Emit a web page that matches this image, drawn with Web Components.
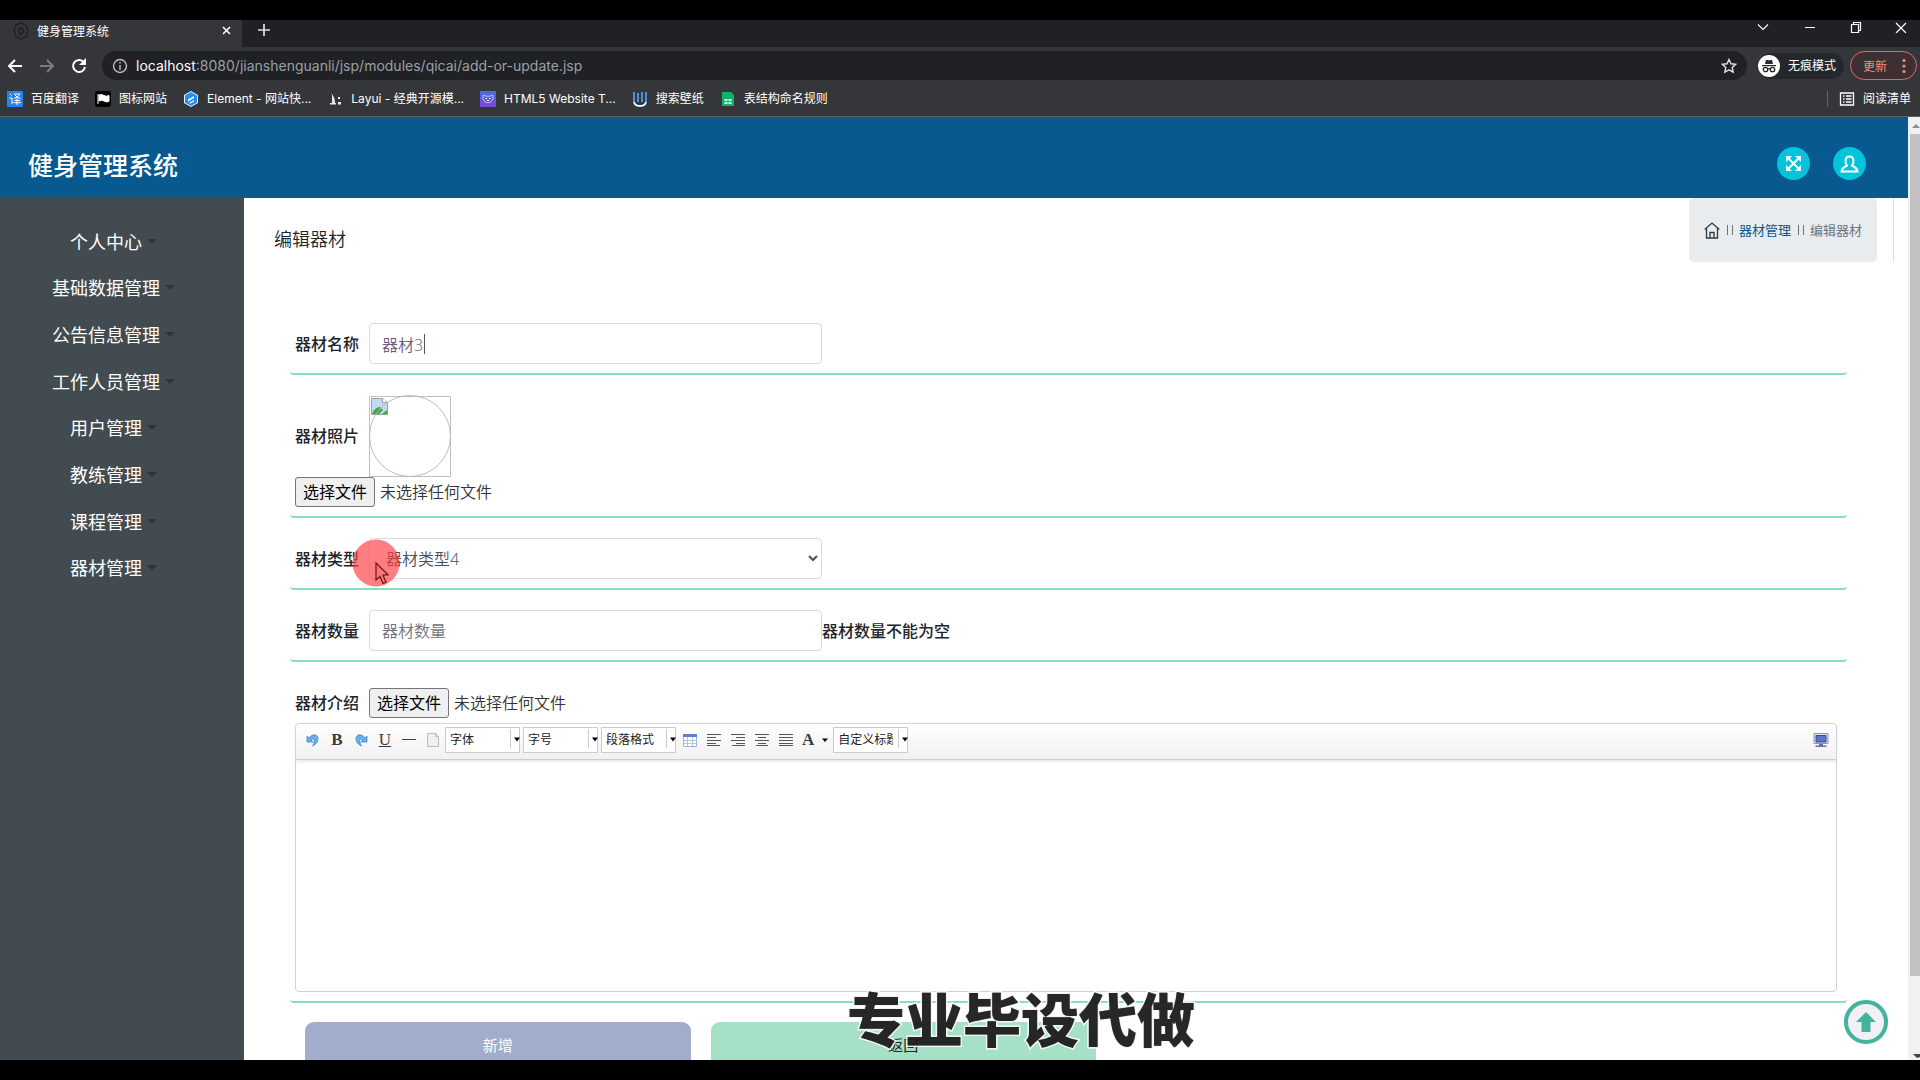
<!DOCTYPE html>
<html lang="zh-CN">
<head>
<meta charset="utf-8">
<title>健身管理系统</title>
<style>
html, body { height: 100%; margin: 0; background: #000; }
body { font-family: "Open Sans", "Noto Sans CJK SC", sans-serif; }
</style>
</head>
<body>
<desktop-screen></desktop-screen>
<script>
function define(name, html) {
  const tpl = document.createElement('template');
  tpl.innerHTML = '<style>:host,*{box-sizing:border-box}button{font:inherit;margin:0;padding:0;border:0;background:none;color:inherit}a{color:inherit;text-decoration:none}svg{display:block;flex:none}</style>' + html;
  customElements.define(name, class extends HTMLElement {
    constructor() {
      super();
      this.attachShadow({ mode: 'open' }).append(tpl.content.cloneNode(true));
    }
  });
}

/* ---------- browser window ---------- */
define('tab-strip', `
<style>
:host{display:flex;height:27px;background:#202124;color:#fff;font-size:12px;align-items:stretch}
.tab{display:flex;align-items:center;width:242px;background:#35363a;padding:0 8px 6px 13px;gap:8px}
.tab span{flex:1}
.tab button,.new{display:grid;place-items:center;width:16px}
.new{margin-left:14px;padding-bottom:7px}
.win{margin-left:auto;display:flex;gap:31px;padding:0 13px 13px 0;align-items:center}
</style>
<div class="tab">
<svg width="16" height="18" viewBox="0 0 16 18" fill="none" stroke="#1c2327" stroke-width="1.5"><path d="M3 3 8 1l5 2 2 6-2 6-5 2-5-2L1 9z"/><path d="M8 4v3m0 4v3"/><circle cx="8" cy="9" r="2.5"/></svg>
<span>健身管理系统</span>
<button aria-label="关闭标签页"><svg width="9" height="9" viewBox="0 0 9 9" stroke="#fff" stroke-width="1.6"><path d="m1 1 7 7m0-7L1 8"/></svg></button>
</div>
<button class="new" aria-label="新标签页"><svg width="12" height="12" viewBox="0 0 12 12" stroke="#dfe1e5" stroke-width="1.7"><path d="M6 0v12M0 6h12"/></svg></button>
<div class="win">
<button aria-label="搜索标签页"><svg width="16" height="12" viewBox="0 0 16 12" fill="none" stroke="#fff" stroke-width="1.1"><path d="m4 3.500 5 5 5-5"/></svg></button>
<button aria-label="最小化"><svg width="16" height="12" viewBox="0 0 16 12" stroke="#fff"><path d="M4 6.500h10"/></svg></button>
<button aria-label="还原"><svg width="16" height="12" viewBox="0 0 16 12" fill="none" stroke="#fff" stroke-width="1.2"><path d="M3.500 3.500h7v8h-7zM5.500 3.500v-2h7v8h-2"/></svg></button>
<button aria-label="关闭"><svg width="12" height="12" viewBox="0 0 12 12" stroke="#fff" stroke-width="1.2"><path d="m1 2 10 10M11 2 1 12"/></svg></button>
</div>`);

define('address-bar', `
<style>
:host{display:flex;align-items:center;height:37px;background:#35363a;padding:0 3px 0 7px;color:#fff;font-size:12px}
.nav{display:flex;gap:16px;margin-right:15px}
.url{flex:1;display:flex;align-items:center;height:29px;border-radius:15px;background:#202124;padding:0 10px;gap:8px;min-width:0}
label{display:flex;flex:1;font-family:"Inter","Noto Sans CJK SC",sans-serif;font-size:14px;line-height:20px;white-space:nowrap;color:#9aa0a6}
b{font-weight:400;color:#fff}
.who{display:flex;align-items:center;gap:8px;height:26px;margin-left:11px;border-radius:13px;background:#26272b;padding-right:8px;line-height:26px}
.up{display:flex;align-items:center;justify-content:space-between;width:67px;height:29px;margin-left:6px;border:1px solid #d96c69;border-radius:15px;background:#3c3033;color:#f28b82;padding:0 10px 0 12px}
</style>
<div class="nav">
<button aria-label="后退"><svg width="16" height="16" viewBox="0 0 16 16" fill="none" stroke="#fff" stroke-width="2"><path d="M15 8H2m6-6L2 8l6 6"/></svg></button>
<button aria-label="前进"><svg width="16" height="16" viewBox="0 0 16 16" fill="none" stroke="#7c7d80" stroke-width="2"><path d="M1 8h13M8 2l6 6-6 6"/></svg></button>
<button aria-label="刷新"><svg width="16" height="16" viewBox="0 0 16 16" fill="none" stroke="#fff" stroke-width="2"><path d="M13 4.500A6 6 0 1 0 14 9"/><path d="M15 0v7H8z" fill="#fff" stroke="none"/></svg></button>
</div>
<div class="url">
<svg width="16" height="16" viewBox="0 0 16 16" fill="none" stroke="#bdc1c6" stroke-width="1.4"><circle cx="8" cy="8" r="6.500"/><path d="M8 7v5M8 4v1.600"/></svg>
<label><b>localhost</b>:8080/jianshenguanli/jsp/modules/qicai/add-or-update.jsp</label>
<svg width="16" height="16" viewBox="0 0 16 16" fill="none" stroke="#dfe1e5" stroke-width="1.400"><path d="m8 1.500 2 4.300 4.600.5-3.400 3.200 1 4.600L8 11.800l-4.200 2.300 1-4.600L1.400 6.300 6 5.800z"/></svg>
</div>
<div class="who">
<svg width="22" height="22" viewBox="0 0 22 22"><circle cx="11" cy="11" r="11" fill="#fff"/><path d="M7 9 8 5h2l1 .6 1-.6h2l1 4zM4 10h14v1.300H4z" fill="#26272b"/><g fill="none" stroke="#26272b" stroke-width="1.300"><circle cx="7.500" cy="14.500" r="2.200"/><circle cx="14.500" cy="14.500" r="2.200"/><path d="M9.700 14q1.300-.8 2.600 0"/></g></svg>
<span>无痕模式</span></div>
<button class="up"><span>更新</span><svg width="4" height="16" viewBox="0 0 4 16" fill="#f28b82"><circle cx="2" cy="2.500" r="1.600"/><circle cx="2" cy="8" r="1.600"/><circle cx="2" cy="13.500" r="1.600"/></svg></button>`);

define('book-mark', `
<style>:host{display:block}a{display:flex;align-items:center;gap:8px;font-family:"Inter","Noto Sans CJK SC",sans-serif;font-size:12px;line-height:20px;color:#fff;white-space:nowrap}</style>
<a href="#"><slot name="icon"></slot><slot></slot></a>`);

define('bookmark-bar', `
<style>
:host{display:flex;align-items:center;height:33px;background:#35363a;border-bottom:1px solid #5a6064;padding:0 9px 3px 7px;gap:16px}
.sep{width:1px;height:16px;background:#5f6368;margin-left:auto;margin-right:-5px}
</style>
<book-mark><svg slot="icon" width="16" height="16" viewBox="0 0 16 16"><rect width="16" height="16" rx="1" fill="#2286f0"/><path d="m3 3 1.500 1.500M2.500 7H5v5.500L6.500 11M7 3h6q-2 3.500-6 4.500M8 4q2 3 5.500 3.500M7.500 9.500h5.500M10 7.500V14M7 11.700h7" stroke="#fff" fill="none"/></svg>百度翻译</book-mark>
<book-mark><svg slot="icon" width="16" height="16" viewBox="0 0 16 16"><rect width="16" height="16" rx="3" fill="#000"/><path d="M3 3v10M4 4q3-1 5 .5t5 0v6q-3 1-5-.5t-5 0z" fill="#fff" stroke="#fff"/></svg>图标网站</book-mark>
<book-mark><svg slot="icon" width="16" height="16" viewBox="0 0 16 16"><path d="m8 0 7 4v8l-7 4-7-4V4z" fill="#e9f5ff"/><path d="m8 1 6 3.500v7L8 15l-6-3.500v-7z" fill="#1f8ff5"/><path d="M5 8.500 11 5v2L5 10.500zM6 12l5-3v1.500l-3.500 2z" fill="#fff"/></svg>Element - 网站快...</book-mark>
<book-mark><svg slot="icon" width="16" height="16" viewBox="0 0 16 16"><path d="M4 2q4 4 4 10H5V4zM3 12h6v1.500H3zM11 6h2v2h-2zM11 11h3v2.500h-3z" fill="#e8eaed"/></svg>Layui - 经典开源模...</book-mark>
<book-mark><svg slot="icon" width="16" height="16" viewBox="0 0 16 16"><defs><linearGradient id="g" x2="0" y2="1"><stop stop-color="#4b6de0"/><stop offset="1" stop-color="#7a45d8"/></linearGradient></defs><rect width="16" height="16" fill="url(#g)"/><path d="m3 4 3 1.200h4L13 4v4q-1 3-5 4-4-1-5-4z" fill="none" stroke="#b9bdf5"/><path d="M5.500 7.500h1.500m2 0h1.500M7 9.500h2" stroke="#fff"/></svg>HTML5 Website T...</book-mark>
<book-mark><svg slot="icon" width="16" height="16" viewBox="0 0 16 16"><path d="M2 1v9q0 5 6 5t6-5V1M6 2v9m4-10v10" fill="none" stroke="#4a90d8" stroke-width="2"/><path d="M2 11q1 4 6 4t6-4" stroke="#fff" fill="none" stroke-width="1.400"/></svg>搜索壁纸</book-mark>
<book-mark><svg slot="icon" width="16" height="16" viewBox="0 0 16 16"><path d="M2 1h9l3 3v11H2z" fill="#0fb269"/><path d="M4.500 8h3v2h-3zM8.500 8h3v2h-3zM4.500 11h3v2h-3zM8.500 11h3v2h-3z" fill="#d9f7e8"/></svg>表结构命名规则</book-mark>
<i class="sep"></i>
<book-mark><svg slot="icon" width="16" height="16" viewBox="0 0 16 16" fill="none" stroke="#fff" stroke-width="1.300"><path d="M1.500 2h13v12h-13zM4 5h1.500M7 5h5.500M4 8h1.500M7 8h5.500M4 11h1.500M7 11h5.500"/></svg>阅读清单</book-mark>`);

/* ---------- application ---------- */
define('app-header', `
<style>
:host{display:flex;align-items:center;justify-content:space-between;height:81px;background:#07598f;padding:12px 42px 0 28px;color:#fff}
h1{margin:0;padding-top:2px;font-size:25px;font-weight:500;line-height:34px}
div{display:flex;gap:23px}
button{width:33px;height:33px;border-radius:50%;background:#02c5dc;display:grid;place-items:center}
</style>
<h1>健身管理系统</h1>
<div>
<button aria-label="全屏"><svg width="17" height="17" viewBox="0 0 17 17"><path d="m3 3 11 11M14 3 3 14" stroke="#fff" stroke-width="2"/><path d="M1 1h6L1 7zM16 1v6l-6-6zM1 16v-6l6 6zM16 16h-6l6-6z" fill="#fff"/></svg></button>
<button aria-label="用户"><svg width="19" height="18" viewBox="0 0 19 18" fill="none" stroke="#fff" stroke-width="2"><path d="M7 10.500C4.500 7 5 1.500 9.500 1.500S14.500 7 12 10.500c1 1 5 1.500 5.500 6h-16c.5-4.500 4.500-5 5.500-6z"/></svg></button>
</div>`);

define('nav-item', `
<style>
:host{display:flex;justify-content:center;align-items:center}
a{position:relative;display:block;color:#fff;font-size:18px;line-height:27px}
a::after{content:"";position:absolute;left:100%;top:10px;margin-left:5px;border:5px solid transparent;border-top-color:#2c3538;border-bottom:0}
</style><a href="#"><slot></slot></a>`);

define('side-nav', `
<style>
:host{display:block;flex:none;width:244px;background:#424c50;padding:21px 32px 0 0}
nav{display:grid;grid-auto-rows:1fr;height:373px}
</style>
<nav><nav-item>个人中心</nav-item><nav-item>基础数据管理</nav-item><nav-item>公告信息管理</nav-item><nav-item>工作人员管理</nav-item><nav-item>用户管理</nav-item><nav-item>教练管理</nav-item><nav-item>课程管理</nav-item><nav-item>器材管理</nav-item></nav>`);

define('page-heading', `
<style>
:host{display:flex;justify-content:space-between;align-items:flex-start;height:64px;padding:0 14px 0 30px}
h2{margin:0;padding-top:28px;font-size:18px;line-height:27px;font-weight:350;color:#212529}
.box{border-right:1px solid #dcdfe6;height:64px;padding:0 16px 0 0}
nav{display:flex;align-items:center;gap:6px;height:64px;padding:0 15px;border-radius:5px;background:#e9ecef;font-size:13px;line-height:20px;color:#6c757d}
nav a{color:#07598f}
i{width:6px;height:10px;margin-left:1px;border:solid #6b7076;border-width:0 1px}
</style>
<h2>编辑器材</h2>
<div class="box"><nav>
<a href="#" aria-label="首页"><svg width="16" height="17" viewBox="0 0 16 17" fill="none" stroke="#2f3b45" stroke-width="1.300"><path d="M.7 7.500 8 1l7.300 6.500M2.500 6.500V16h11V6.500M6 16v-5.500h4V16"/></svg></a>
<i></i><a href="#">器材管理</a><i></i><span>编辑器材</span></nav></div>`);

define('form-row', `
<style>
:host{display:block;border-bottom:2px solid #86dfbf;border-radius:4px;padding:20px 10px 9px 5px}
.line{display:flex;align-items:center;min-height:41px}
.line ::slotted(label:first-child){margin-right:10px}
</style>
<div class="line"><slot></slot></div><slot name="below"></slot>`);

define('file-picker', `
<style>
:host{display:flex;align-items:center;gap:5px;font-size:16px;color:#333;line-height:24px}
input{display:none}
button{height:30px;padding:0 7px;border:1px solid #767676;border-radius:3px;background:#efefef;color:#000}
span{font-weight:350}
</style>
<input type="file" aria-label="选择文件"><button type="button" onclick="this.previousElementSibling.click()">选择文件</button><span>未选择任何文件</span>`);

define('missing-image', `
<style>
:host{display:block;width:82px;height:82px}
</style>
<svg width="82" height="82" viewBox="0 0 82 82" fill="none"><path d="M.5 1.500h81v80H.5z" stroke="#c0c0c0"/><path d="M2.500 3.500h11l5 4v12h-16z" fill="#c4d8f3" stroke="#9aa0a8"/><path d="M3 19q3-7 8-7l3 3-4 4zM13 19l5-4v4z" fill="#49a33c"/><path d="M13.500 3.500v4h5" fill="#fff" stroke="#9aa0a8"/><circle cx="41" cy="41" r="40.500" stroke="#b9bbc0"/></svg>`);

define('tool-select', `
<style>
:host{display:block;position:relative;width:75px;height:26px}
select{appearance:none;width:100%;height:100%;border:1px solid #ccc;border-radius:0;background:#fff;font:12px/16px "Open Sans","Noto Sans CJK SC",sans-serif;color:#222;padding:0 14px 0 4px;margin:0}
svg{position:absolute;right:0;top:1px;pointer-events:none}
</style>
<select></select><svg width="11" height="24" viewBox="0 0 11 24"><path d="M1.500 1v19" stroke="#ccc"/><path d="M5 9.500h6l-3 4z" fill="#000"/></svg>`);

define('rich-editor', `
<style>
:host{display:block;border:1px solid #d0d0d4;border-radius:4px;height:269px;background:#fff}
.bar{display:flex;align-items:center;height:36px;padding:0 7px 4px 9px;background:linear-gradient(#fff,#f1f0f2);border-bottom:1px solid #ccc;border-radius:4px 4px 0 0;box-shadow:0 1px 4px #ddd}
.set{display:flex;align-items:center;gap:8px}
.sel{display:flex;gap:3px;margin:0 6px 0 4px}
.color{display:flex;align-items:center;margin:0 3px 0 8px}
.full{margin-left:auto}
button{display:block;min-width:16px;height:16px;font:bold 17px/16px "Liberation Serif",serif;color:#3c3c3c}
.u{font-weight:400;text-decoration:underline}
</style>
<div class="bar">
<div class="set">
<button aria-label="撤销"><svg width="16" height="16" viewBox="0 0 16 16"><path d="M2 4v6h6L6 8Q10 5.500 9 10q0 2-1.500 4 6-3 5.500-8-1-4-5-3Q5.500 3.500 4 6z" fill="#6aaeea" stroke="#337fc8" stroke-width=".7"/></svg></button>
<button>B</button>
<button aria-label="重做"><svg width="16" height="16" viewBox="0 0 16 16"><path d="M14 4v6H8l2-2Q6 5.500 7 10q0 2 1.500 4-6-3-5.500-8 1-4 5-3 2.500.5 4 3z" fill="#6aaeea" stroke="#337fc8" stroke-width=".7"/></svg></button>
<button class="u">U</button>
<button aria-label="分隔线"><svg width="16" height="16" viewBox="0 0 16 16"><path d="M1 7.500h14" stroke="#444"/></svg></button>
<button aria-label="清空"><svg width="16" height="16" viewBox="0 0 16 16" fill="#f0f0f0" stroke="#bbb"><path d="M2.500 1.500h8l3 3v10h-11zM10.500 1.500v3h3"/></svg></button>
</div>
<div class="sel"><tool-select data-text="字体"></tool-select><tool-select data-text="字号"></tool-select><tool-select data-text="段落格式"></tool-select></div>
<div class="set">
<button aria-label="表格"><svg width="16" height="16" viewBox="0 0 16 16"><path d="M1.500 2.500h13v12h-13z" fill="#fff" stroke="#9fb4dd"/><path d="M1 2h14v3H1z" fill="#5c7fd6"/><path d="M2 8.500h12M2 11.500h12M5.500 5v9M10.500 5v9" stroke="#b3c4e6"/></svg></button>
<button aria-label="左对齐"><svg width="16" height="16" viewBox="0 0 16 16"><path d="M1 2.500h14M1 5.500h9M1 8.500h14M1 11.500h9M1 13.500h13" stroke="#555"/></svg></button>
<button aria-label="右对齐"><svg width="16" height="16" viewBox="0 0 16 16"><path d="M1 2.500h14M6 5.500h9M1 8.500h14M6 11.500h9M2 13.500h13" stroke="#555"/></svg></button>
<button aria-label="居中"><svg width="16" height="16" viewBox="0 0 16 16"><path d="M1 2.500h14M4 5.500h8M1 8.500h14M4 11.500h8M2 13.500h12" stroke="#555"/></svg></button>
<button aria-label="两端对齐"><svg width="16" height="16" viewBox="0 0 16 16"><path d="M1 2.500h14M1 5.500h14M1 8.500h14M1 11.500h14M1 13.500h14" stroke="#555"/></svg></button>
</div>
<button class="color">A<svg width="16" height="16" viewBox="0 0 16 16"><path d="M8 6.500h6l-3 3.500z" fill="#000"/></svg></button>
<tool-select data-text="自定义标题"></tool-select>
<button class="full" aria-label="全屏"><svg width="16" height="16" viewBox="0 0 16 16"><path d="M1 1.500h14v10H1z" fill="#dbe3f7" stroke="#8393c4"/><path d="M3 3.500h10v6.500H3z" fill="#5f74cb" stroke="#3a4a96"/><path d="M6 12h4v1.500H6zM2.500 13.500h11v1.500h-11z" fill="#6673a0"/></svg></button>
</div>`);

define('equipment-form', `
<style>
:host{display:block;padding:41px 61px 0 46px;font-size:16px;color:#212529}
label,output{font-weight:500;line-height:24px;white-space:nowrap}
input,select{width:453px;height:41px;border:1px solid #d9dce3;border-radius:4px;background:#fff;font:350 16px/24px "Open Sans","Noto Sans CJK SC",sans-serif;color:#495057;padding:0 12px;margin:0;outline:0}
input::placeholder{color:#6c757d;opacity:1}
select{padding:0 3px 0 12px}
/* text cursor after the typed value */
#name{color:#6d5b7d;background:linear-gradient(#555,#555) 54px 10px/1px 20px no-repeat #fff}
.actions{display:flex;gap:20px;padding:19px 0 0 15px}
.actions button{width:25%;height:48px;border-radius:9px;background:#a2adcc;color:#fff;font-size:15px;line-height:22px;padding-bottom:2px}
.actions button+button{background:#a6e1c7;color:#212529}
</style>
<form>
<form-row><label for="name">器材名称</label><input id="name" value="器材3"></form-row>
<form-row><label>器材照片</label><missing-image></missing-image><file-picker slot="below"></file-picker></form-row>
<form-row><label for="kind">器材类型</label><select id="kind"><option>器材类型4</option></select></form-row>
<form-row><label for="amount">器材数量</label><input id="amount" placeholder="器材数量"><output for="amount">器材数量不能为空</output></form-row>
<form-row><label>器材介绍</label><file-picker></file-picker><rich-editor slot="below"></rich-editor></form-row>
<div class="actions"><button type="button">新增</button><button type="button">返回</button></div>
</form>`);

define('page-scrollbar', `
<style>
:host{display:flex;flex-direction:column;align-items:flex-end;width:12px;flex:none;background:#f1f0f2;overflow:hidden}
i{width:10px;flex:1;background:#c1c0c2}
p{height:84px;margin:0;display:flex;align-items:flex-end}
</style>
<svg width="12" height="17" viewBox="0 0 12 17"><path d="m4 11 4-4 4 4z" fill="#8b8b8b"/></svg><i></i><p><svg width="12" height="8" viewBox="0 0 12 8"><path d="M5 2h7v3L9 6z" fill="#444"/></svg></p>`);

define('to-top', `
<style>:host,button{display:block}</style>
<button aria-label="回到顶部"><svg width="48" height="48" viewBox="0 0 48 48"><circle cx="24" cy="24" r="22.500" fill="#d8f6f3"/><circle cx="24" cy="24" r="20" fill="#f1f0f5" stroke="#42b39d" stroke-width="4"/><path d="m24 14 10 10h-5.500v10h-9V24H14z" fill="#42b39d"/></svg></button>`);

define('click-marker', `
<style>:host{display:block;pointer-events:none}</style>
<svg width="48" height="48" viewBox="0 0 48 48"><circle cx="24" cy="24" r="23.500" fill="#ff3b3f" fill-opacity=".66"/><path d="M24 24v17l4-3.500 3 7 3-1.300-3-7 5-.5z" fill="#ff7477" stroke="#6b1518" stroke-width="1.200"/></svg>`);

define('desktop-screen', `
<style>
:host{position:relative;display:flex;flex-direction:column;height:100vh;padding:20px 0;background:#000;overflow:hidden}
.view{flex:1;display:flex;min-height:0;background:#fff}
.app{flex:1;display:flex;flex-direction:column;min-width:0;overflow:hidden}
.body{flex:1;display:flex;min-height:0}
main{flex:1;min-width:0;overflow:hidden;background:#fff}
to-top{position:absolute;right:30px;bottom:34px}
click-marker{position:absolute;left:352px;top:539px}
.caption{position:absolute;left:847px;bottom:18px;margin:0;font-size:58px;line-height:84px;font-weight:900;color:#1c1c1c;white-space:nowrap;-webkit-text-stroke:3px #fff;paint-order:stroke fill;text-shadow:0 0 1px #777;opacity:.95;pointer-events:none}
</style>
<tab-strip></tab-strip><address-bar></address-bar><bookmark-bar></bookmark-bar>
<div class="view">
<div class="app"><app-header></app-header>
<div class="body"><side-nav></side-nav><main><page-heading></page-heading><equipment-form></equipment-form></main></div></div>
<page-scrollbar></page-scrollbar>
</div>
<to-top></to-top><click-marker></click-marker>
<p class="caption">专业毕设代做</p>`);

const form = document.querySelector('desktop-screen').shadowRoot.querySelector('equipment-form').shadowRoot;
form.querySelector('rich-editor').shadowRoot.querySelectorAll('tool-select').forEach(item => {
  const select = item.shadowRoot.querySelector('select');
  select.append(new Option(item.dataset.text));
  select.setAttribute('aria-label', item.dataset.text);
});
</script>
</body>
</html>
